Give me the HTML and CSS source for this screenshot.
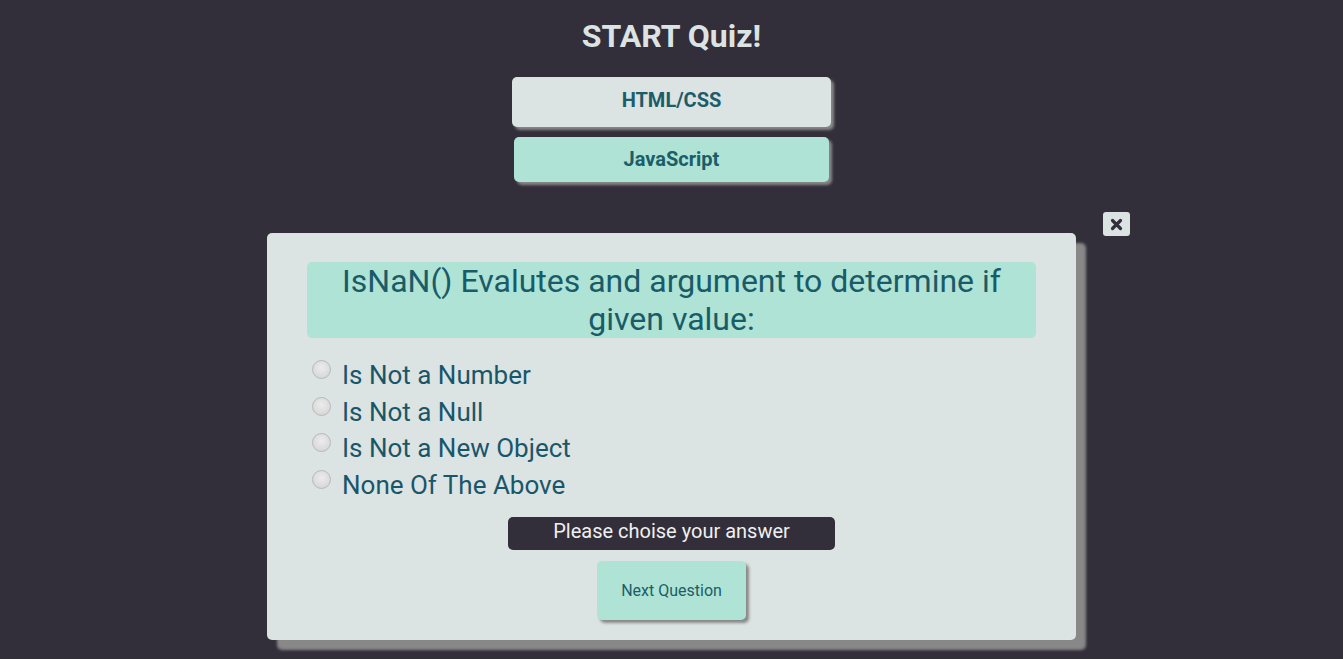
FILE: index.html
```html
<!DOCTYPE html>
<html>
<head>
<meta charset="utf-8">
<link rel="stylesheet" href="styles.css">
</head>
<body>
<header class="top">
  <h1 class="title">START Quiz!</h1>
  <button class="topic topic-html">HTML/CSS</button>
  <button class="topic topic-js">JavaScript</button>
</header>
<main class="stage">
  <div class="card-wrap">
    <button class="close" aria-label="close"><svg width="13" height="13" viewBox="0 0 13 13"><path d="M2.5 2.5 L10.5 10.5 M10.5 2.5 L2.5 10.5" stroke="#322e3a" stroke-width="3.2" stroke-linecap="round" fill="none"/></svg></button>
    <section class="card">
      <h2 class="question">IsNaN() Evalutes and argument to determine if given value:</h2>
      <ul class="answers">
        <li><label><input type="radio" name="a"><span>Is Not a Number</span></label></li>
        <li><label><input type="radio" name="a"><span>Is Not a Null</span></label></li>
        <li><label><input type="radio" name="a"><span>Is Not a New Object</span></label></li>
        <li><label><input type="radio" name="a"><span>None Of The Above</span></label></li>
      </ul>
      <div class="feedback">Please choise your answer</div>
      <button class="next">Next Question</button>
    </section>
  </div>
</main>
</body>
</html>
```
FILE: styles.css
```css
* { box-sizing: border-box; }
html, body { margin: 0; padding: 0; }
body {
  background: #322e3a;
  font-family: Roboto, "Liberation Sans", sans-serif;
  height: 659px;
  overflow: hidden;
}
.top {
  display: flex;
  flex-direction: column;
  align-items: center;
}
.title {
  margin: 17px 0 0;
  font-size: 32px;
  line-height: 38px;
  font-weight: 700;
  color: #dce3e3;
}
.topic {
  border: none;
  border-radius: 5px;
  font-family: inherit;
  font-weight: 700;
  font-size: 20px;
  color: #1b5d68;
  box-shadow: 3px 3px 3px #888;
  cursor: pointer;
  padding: 0 0 5px;
}
.topic-html {
  margin-top: 22px;
  width: 319px;
  height: 50px;
  background: #dce3e3;
}
.topic-js {
  margin-top: 10px;
  width: 315px;
  height: 45px;
  background: #aee3d6;
  padding-bottom: 2px;
}
.stage {
  display: flex;
  justify-content: center;
  margin-top: 51px;
}
.card-wrap {
  position: relative;
  width: 809px;
}
.close {
  position: absolute;
  right: -54px;
  top: -21px;
  width: 27px;
  height: 24px;
  border: none;
  border-radius: 3px;
  background: #dce3e3;
  padding: 0;
  display: flex;
  align-items: center;
  justify-content: center;
}
.close svg { display: block; }
.card {
  background: #dce3e3;
  border-radius: 5px;
  box-shadow: 10px 10px 3px #888;
  height: 407px;
  padding: 29px 40px 0;
  display: flex;
  flex-direction: column;
  align-items: center;
}
.question {
  margin: 0;
  width: 729px;
  height: 76px;
  background: #aee3d6;
  border-radius: 5px;
  font-weight: 400;
  font-size: 32px;
  line-height: 38px;
  color: #1a5b68;
  text-align: center;
  padding: 0 20px;
}
.answers {
  list-style: none;
  margin: 22px 0 0;
  padding: 0 0 0 5px;
  align-self: stretch;
}
.answers li {
  height: 36.7px;
}
.answers label {
  display: flex;
  align-items: flex-start;
}
.answers input {
  appearance: none;
  -webkit-appearance: none;
  margin: 0;
  width: 19px;
  height: 19px;
  border-radius: 50%;
  border: 1px solid #b9b9b9;
  background: radial-gradient(circle at 50% 40%, #ececec 0%, #dcdcdc 60%, #d0d0d0 100%);
}
.answers span {
  margin-left: 11px;
  font-size: 26px;
  line-height: 30px;
  color: #18566a;
}
.feedback {
  margin-top: 10px;
  width: 327px;
  height: 33px;
  background: #322e3a;
  border-radius: 5px;
  color: #f0f0f0;
  font-size: 20px;
  line-height: 28px;
  text-align: center;
}
.next {
  margin-top: 11px;
  width: 149px;
  height: 59px;
  border: none;
  border-radius: 5px;
  background: #aee3d6;
  color: #1b5d68;
  font-family: inherit;
  font-size: 16px;
  box-shadow: 3px 3px 3px #888;
}
```
